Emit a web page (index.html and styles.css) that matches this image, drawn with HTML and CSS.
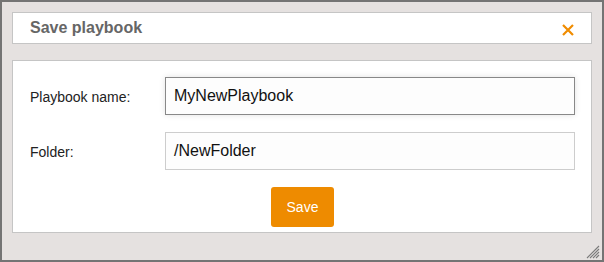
FILE: index.html
```html
<!DOCTYPE html>
<html>
<head>
<meta charset="utf-8">
<link rel="stylesheet" href="styles.css">
</head>
<body>
<div class="dialog">
  <div class="titlebar">
    <span class="title">Save playbook</span>
    <svg class="close" width="12" height="12" viewBox="0 0 12 12"><path d="M1 1L11 11M11 1L1 11" stroke="#f08c00" stroke-width="2.2" fill="none"/></svg>
  </div>
  <div class="content">
    <div class="row">
      <label class="label">Playbook name:</label>
      <div class="input focused">MyNewPlaybook</div>
    </div>
    <div class="row">
      <label class="label">Folder:</label>
      <div class="input">/NewFolder</div>
    </div>
    <div class="actions">
      <button class="save">Save</button>
    </div>
  </div>
  <svg class="grip" width="14" height="14" viewBox="0 0 14 14">
    <path d="M13 1L1 13M13 4L4 13M13 7L7 13M13 10L10 13" stroke="#7a7a7a" stroke-width="1.1" fill="none"/>
  </svg>
</div>
</body>
</html>
```
FILE: styles.css
```css
html, body {
  margin: 0;
  padding: 0;
}
body {
  background: #747474;
  width: 604px;
  height: 262px;
  overflow: hidden;
  font-family: "Liberation Sans", Arial, sans-serif;
}
.dialog {
  position: relative;
  margin: 2px 2px 0 2px;
  width: 600px;
  height: 258px;
  box-sizing: border-box;
  background: #e5e1e0;
  padding: 10px;
}
.titlebar {
  height: 32px;
  box-sizing: border-box;
  background: #fff;
  border: 1px solid #c5c5c5;
  display: flex;
  align-items: center;
  justify-content: space-between;
  padding: 0 17px 0 17px;
}
.title {
  font-weight: bold;
  font-size: 16px;
  color: #666;
}
.close {
  display: block;
  margin-top: 3px;
}
.content {
  margin-top: 16px;
  height: 173px;
  box-sizing: border-box;
  background: #fff;
  border: 1px solid #c5c5c5;
  padding: 16px 16px 0 17px;
  display: flex;
  flex-direction: column;
  gap: 17px;
}
.row {
  display: grid;
  grid-template-columns: 135px 1fr;
  align-items: center;
}
.label {
  font-size: 14px;
  color: #222;
  padding-top: 2px;
}
.input {
  height: 38px;
  box-sizing: border-box;
  border: 1px solid #cdcdcd;
  background: #fdfdfd;
  font-size: 16px;
  color: #111;
  padding: 0 8px;
  display: flex;
  align-items: center;
}
.input.focused {
  border-color: #888;
  box-shadow: 0 0 6px rgba(0,0,0,0.12);
}
.actions {
  display: flex;
  justify-content: center;
}
.save {
  width: 63px;
  height: 40px;
  border: none;
  border-radius: 3px;
  background: #ee8b00;
  color: #fff;
  font-family: "Liberation Sans", Arial, sans-serif;
  font-size: 14px;
  padding: 0;
}
.grip {
  position: absolute;
  right: 2px;
  bottom: 1px;
}
```
